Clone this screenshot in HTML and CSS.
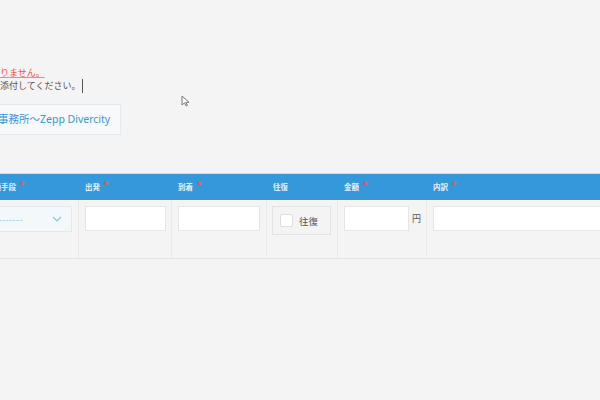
FILE: index.html
```html
<!DOCTYPE html>
<html lang="ja">
<head>
  <meta charset="UTF-8" />
  <title>交通費精算</title>
  <link rel="stylesheet" href="styles.css">
</head>
<body>
  <div class="page">
    <div class="messages">
      <div class="msg error">がありません。</div>
      <div class="msg">書を添付してください。<span class="caret"></span></div>
    </div>

    <div class="route">品川事務所～Zepp Divercity</div>

    <div class="expense">
      <div class="expense-head">
        <div class="th">交通手段<span class="req">*</span></div>
        <div class="th">出発<span class="req">*</span></div>
        <div class="th">到着<span class="req">*</span></div>
        <div class="th">往復</div>
        <div class="th">金額<span class="req">*</span></div>
        <div class="th">内訳<span class="req">*</span></div>
      </div>
      <div class="expense-row">
        <div class="td">
          <div class="select">
            <span class="placeholder">--------</span>
            <svg class="chevron" width="10" height="6" viewBox="0 0 10 6"><polyline points="1,1 5,5 9,1" fill="none" stroke="#8cc3e6" stroke-width="1.2"/></svg>
          </div>
        </div>
        <div class="td"><input class="field" type="text"></div>
        <div class="td"><input class="field" type="text"></div>
        <div class="td">
          <label class="round-trip"><span class="box"></span>往復</label>
        </div>
        <div class="td amount">
          <input class="field" type="text"><span class="yen">円</span>
        </div>
        <div class="td"><input class="field wide" type="text"></div>
      </div>
    </div>
  </div>

  <svg class="pointer" width="9" height="12" viewBox="0 0 9 12">
    <path d="M1 1 L1 10 L3.5 7.8 L5.2 11 L6.4 10.4 L4.8 7.3 L8 7.3 Z" fill="#fff" stroke="#777" stroke-width="1"/>
  </svg>
</body>
</html>
```

FILE: styles.css
```css
html, body {
  margin: 0;
  background: #f4f4f4;
  overflow: hidden;
  font-family: "Noto Sans", "Noto Sans CJK JP", sans-serif;
}

.page {
  padding-top: 66px;
  width: 640px;
}

.messages {
  margin-left: -18px;
}

.msg {
  font-size: 9px;
  line-height: 13px;
  color: #555;
  white-space: nowrap;
}

.msg.error {
  color: #ff4f4f;
  text-decoration: underline;
  text-decoration-color: #ff7f7f;
}

.caret {
  display: inline-block;
  width: 0;
  height: 14px;
  margin-left: 2px;
  border-left: 1px solid #555;
  vertical-align: -4px;
}

.route {
  display: inline-block;
  margin: 11px 0 0 -34px;
  padding: 0 10px;
  line-height: 29px;
  font-size: 10.5px;
  color: #3498db;
  background: #f7f9fa;
  border: 1px solid #e4eaed;
  white-space: nowrap;
}

.expense {
  margin: 38px 0 0 -20px;
}

.expense-head,
.expense-row {
  display: grid;
  grid-template-columns: 99px 93px 95px 71px 89px 1fr;
}

.expense-head {
  height: 26px;
  background: #3498db;
  border-top: 1px solid #c2def3;
}

.th {
  padding-left: 6px;
  font-size: 7.5px;
  line-height: 26px;
  font-weight: bold;
  color: #e6f1fa;
  white-space: nowrap;
}

.req {
  position: relative;
  top: -2px;
  margin-left: 4px;
  color: #f0574a;
  font-size: 8px;
  line-height: 0;
}

.expense-row {
  height: 58px;
  border-bottom: 1px solid #e6e6e6;
}

.td {
  padding: 6px 6px 0;
  border-right: 1px solid #e9e9e9;
}

.td:last-child {
  border-right: none;
}

.select {
  display: flex;
  align-items: center;
  justify-content: space-between;
  height: 24px;
  padding: 0 9px 0 8px;
  background: #f3f8fb;
  border: 1px solid #e2eaee;
}

.placeholder {
  font-size: 9px;
  color: #8cc3e6;
  letter-spacing: 0.6px;
}

.field {
  display: block;
  box-sizing: border-box;
  width: 81px;
  height: 25px;
  margin: 0;
  padding: 0 4px;
  background: #fff;
  border: 1px solid #e6e6e6;
  border-radius: 0;
  outline: none;
}

.td:nth-child(3) .field {
  width: 82px;
}

.field.wide {
  width: 100%;
}

.round-trip {
  display: flex;
  align-items: center;
  gap: 6px;
  height: 27px;
  margin-left: -1px;
  padding-left: 7px;
  border: 1px solid #e3e3e3;
  font-size: 9.5px;
  color: #555;
}

.box {
  width: 11px;
  height: 11px;
  background: #fff;
  border: 1px solid #dedede;
  border-radius: 2px;
}

.amount {
  display: flex;
  align-items: flex-start;
  gap: 3px;
}

.amount .field {
  width: 65px;
}

.yen {
  font-size: 9px;
  line-height: 25px;
  color: #555;
}

.pointer {
  position: absolute;
  left: 181px;
  top: 95px;
}
```
